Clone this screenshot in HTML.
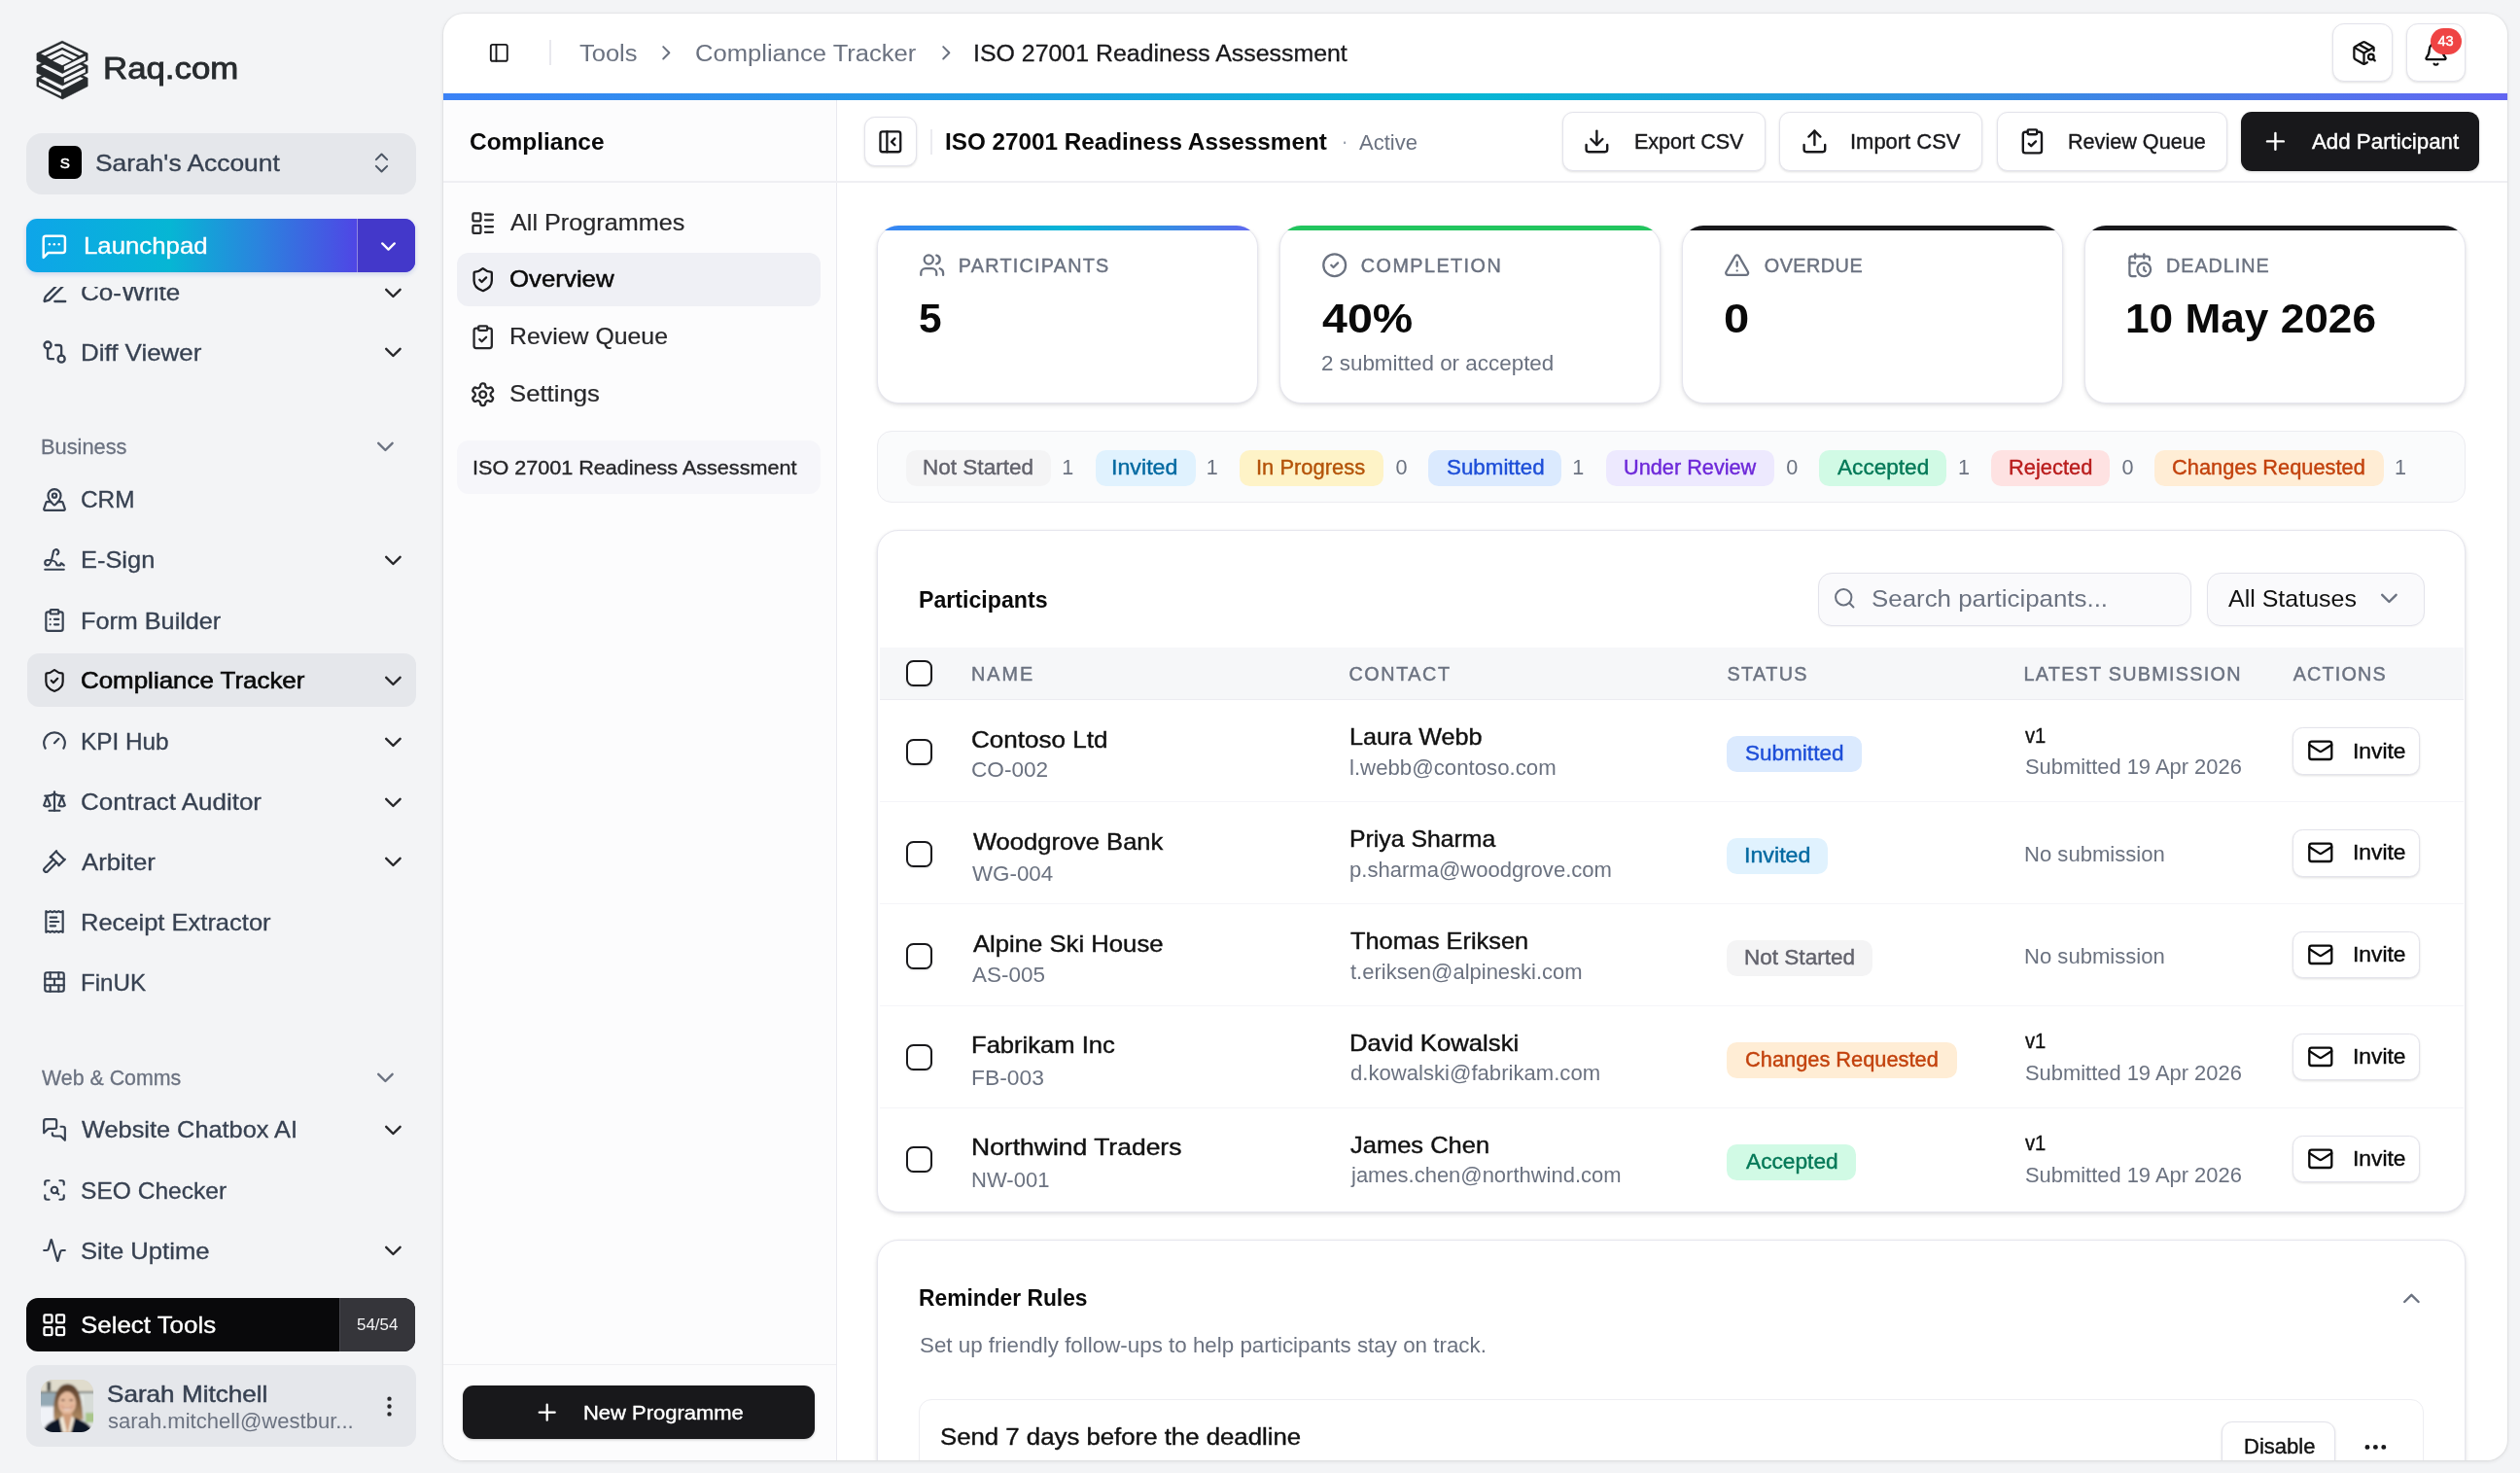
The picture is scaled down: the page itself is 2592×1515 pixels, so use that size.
<!DOCTYPE html>
<html lang="en"><head><meta charset="utf-8"><title>Compliance Tracker</title>
<style>
html,body{margin:0;padding:0}
body{width:2592px;height:1515px;overflow:hidden;background:#f3f4f6;position:relative;font-family:"Liberation Sans",sans-serif}
.a{position:absolute;box-sizing:border-box}
.t{white-space:nowrap;line-height:1;margin:0}
.i{fill:none;stroke-linecap:round;stroke-linejoin:round;overflow:visible}
</style></head>
<body>
<svg class="a" style="left:34px;top:38px" width="64" height="68" viewBox="0 0 1386 1473"><polygon points="650,640 1215,915 1215,1100 655,1385 85,1100 85,915" fill="#272b2e" stroke="#272b2e" stroke-width="14" stroke-linejoin="round"/><polygon points="650,700 1125,928 650,1175 175,928" fill="#f3f4f6"/><polygon points="128,995 625,1243 625,1322 128,1075" fill="#f3f4f6"/><polygon points="650,365 1215,640 1215,800 655,1085 85,800 85,640" fill="#272b2e" stroke="#272b2e" stroke-width="14" stroke-linejoin="round"/><polygon points="650,425 1125,653 650,900 175,653" fill="#f3f4f6"/><polygon points="690,930 1165,700 1165,790 690,1020" fill="#f3f4f6"/><polygon points="650,90 1215,365 1215,525 655,810 85,525 85,365" fill="#272b2e" stroke="#272b2e" stroke-width="14" stroke-linejoin="round"/><polygon points="175,372 650,140 1125,372 1035,416 650,235 265,418" fill="#f3f4f6"/><polygon points="310,450 650,285 990,450 900,502 650,380 400,502" fill="#f3f4f6"/><polygon points="650,430 860,532 650,635 440,532" fill="#f3f4f6"/><polygon points="690,655 1165,425 1165,515 690,745" fill="#f3f4f6"/></svg>
<span class="a t" style="top:55.4px;font-size:31.4px;color:#272b2e;-webkit-text-stroke:0.85px #272b2e;transform:scaleX(1.1089);transform-origin:0 50%;left:105.6px;">Raq.com</span>
<div class="a" style="left:27.0px;top:137.0px;width:400.6px;height:62.6px;background:#e5e7eb;border-radius:16px;"></div>
<div class="a" style="left:49.8px;top:150.1px;width:34.3px;height:34.3px;background:#000;border-radius:7px;"></div>
<span class="a t" style="top:160.0px;font-size:15.2px;color:#fff;-webkit-text-stroke:0.5px #fff;left:61.7px;transform:translateZ(0);">S</span>
<span class="a t" style="top:157.1px;font-size:23.4px;color:#374151;-webkit-text-stroke:0.35px #374151;transform:scaleX(1.1272);transform-origin:0 50%;left:97.9px;">Sarah's Account</span>
<svg class="a i" style="left:378.5px;top:153.5px;" width="27" height="27" viewBox="0 0 24 24" stroke="#4b5563" stroke-width="1.8"><path d="m7 15 5 5 5-5"/><path d="m7 9 5-5 5 5"/></svg>
<svg class="a i" style="left:42.0px;top:286.2px;" width="28.8" height="28.8" viewBox="0 0 24 24" stroke="#374151" stroke-width="2"><path d="M12 20h9"/><path d="M16.376 3.622a1 1 0 0 1 3.002 3.002L7.368 18.635a2 2 0 0 1-.855.506l-2.872.838a.5.5 0 0 1-.62-.62l.838-2.872a2 2 0 0 1 .506-.854z"/></svg>
<span class="a t" style="top:290.1px;font-size:23.4px;color:#374151;-webkit-text-stroke:0.3px #374151;transform:scaleX(1.1121);transform-origin:0 50%;left:83.1px;">Co-Write</span>
<svg class="a i" style="left:389.9px;top:286.7px;" width="28.8" height="28.8" viewBox="0 0 24 24" stroke="#27272a" stroke-width="2"><path d="m6 9 6 6 6-6"/></svg>
<div class="a" style="left:0.0px;top:280.0px;width:440.0px;height:14.7px;background:#f3f4f6;"></div>
<svg class="a i" style="left:42.3px;top:348.1px;" width="28.2" height="28.2" viewBox="0 0 24 24" stroke="#374151" stroke-width="2"><circle cx="18" cy="18" r="3"/><circle cx="6" cy="6" r="3"/><path d="M13 6h3a2 2 0 0 1 2 2v7"/><path d="M11 18H8a2 2 0 0 1-2-2V9"/></svg>
<span class="a t" style="top:351.7px;font-size:23.4px;color:#374151;-webkit-text-stroke:0.3px #374151;transform:scaleX(1.1082);transform-origin:0 50%;left:83.1px;">Diff Viewer</span>
<svg class="a i" style="left:389.9px;top:348.3px;" width="28.8" height="28.8" viewBox="0 0 24 24" stroke="#27272a" stroke-width="2"><path d="m6 9 6 6 6-6"/></svg>
<div class="a" style="left:27.2px;top:225.4px;width:399.6px;height:54.4px;border-radius:11px;box-shadow:0 2px 5px rgba(30,64,175,.18);background:linear-gradient(90deg,#0ea5e9 0%,#06b6d4 37%,#2b83de 60%,#4f46e5 85%);overflow:hidden;"><div class="a" style="left:339.8px;top:0;width:60px;height:54.4px;background:#4338ca;border-left:1.6px solid rgba(255,255,255,.42)"></div></div>
<svg class="a i" style="left:41.0px;top:239.2px;" width="29.6" height="29.6" viewBox="0 0 24 24" stroke="#fff" stroke-width="2"><path d="M21 15a2 2 0 0 1-2 2H7l-4 4V5a2 2 0 0 1 2-2h14a2 2 0 0 1 2 2z"/><path d="M8 10h.01"/><path d="M12 10h.01"/><path d="M16 10h.01"/></svg>
<span class="a t" style="top:242.0px;font-size:23.4px;color:#fff;-webkit-text-stroke:0.35px #fff;transform:scaleX(1.1024);transform-origin:0 50%;left:85.8px;">Launchpad</span>
<svg class="a i" style="left:386.5px;top:240.9px;" width="25" height="25" viewBox="0 0 24 24" stroke="#fff" stroke-width="2.2"><path d="m6 9 6 6 6-6"/></svg>
<span class="a t" style="top:449.2px;font-size:21.6px;color:#6b7280;-webkit-text-stroke:0.3px #6b7280;transform:scaleX(1.0101);transform-origin:0 50%;left:41.6px;">Business</span>
<svg class="a i" style="left:382.3px;top:445.3px;" width="28.8" height="28.8" viewBox="0 0 24 24" stroke="#6b7280" stroke-width="2"><path d="m6 9 6 6 6-6"/></svg>
<svg class="a i" style="left:43.4px;top:500.5px;" width="26" height="26" viewBox="0 0 24 24" stroke="#374151" stroke-width="2"><path d="M18 8c0 3.613-3.869 7.429-5.393 8.795a1 1 0 0 1-1.214 0C9.87 15.429 6 11.613 6 8a6 6 0 0 1 12 0"/><circle cx="12" cy="8" r="2"/><path d="M8.714 14h-3.71a1 1 0 0 0-.948.683l-2.004 6A1 1 0 0 0 3 22h18a1 1 0 0 0 .948-1.316l-2-6a1 1 0 0 0-.949-.684h-3.712"/></svg>
<span class="a t" style="top:503.0px;font-size:23.4px;color:#374151;-webkit-text-stroke:0.3px #374151;transform:scaleX(1.0417);transform-origin:0 50%;left:83.2px;">CRM</span>
<svg class="a i" style="left:43.4px;top:562.8px;" width="26" height="26" viewBox="0 0 24 24" stroke="#374151" stroke-width="2"><path d="m21 17-2.156-1.868A.5.5 0 0 0 18 15.5v.5a1 1 0 0 1-1 1h-2a1 1 0 0 1-1-1c0-2.545-3.991-3.97-8.5-4a1 1 0 0 0 0 5c4.153 0 4.745-11.295 5.708-13.5a2.5 2.5 0 1 1 3.31 3.284"/><path d="M3 21h18"/></svg>
<span class="a t" style="top:565.3px;font-size:23.4px;color:#374151;-webkit-text-stroke:0.3px #374151;transform:scaleX(1.0866);transform-origin:0 50%;left:83.1px;">E-Sign</span>
<svg class="a i" style="left:389.9px;top:561.9px;" width="28.8" height="28.8" viewBox="0 0 24 24" stroke="#27272a" stroke-width="2"><path d="m6 9 6 6 6-6"/></svg>
<svg class="a i" style="left:43.4px;top:625.0px;" width="26" height="26" viewBox="0 0 24 24" stroke="#374151" stroke-width="2"><rect width="8" height="4" x="8" y="2" rx="1" ry="1"/><path d="M16 4h2a2 2 0 0 1 2 2v14a2 2 0 0 1-2 2H6a2 2 0 0 1-2-2V6a2 2 0 0 1 2-2h2"/><path d="M12 11h4"/><path d="M12 16h4"/><path d="M8 11h.01"/><path d="M8 16h.01"/></svg>
<span class="a t" style="top:627.5px;font-size:23.4px;color:#374151;-webkit-text-stroke:0.3px #374151;transform:scaleX(1.0775);transform-origin:0 50%;left:83.1px;">Form Builder</span>
<div class="a" style="left:28.0px;top:672.4px;width:399.6px;height:54.4px;background:#e5e7eb;border-radius:12px;"></div>
<svg class="a i" style="left:43.4px;top:686.6px;" width="26" height="26" viewBox="0 0 24 24" stroke="#18181b" stroke-width="2"><path d="M20 13c0 5-3.5 7.5-7.66 8.95a1 1 0 0 1-.67-.01C7.5 20.5 4 18 4 13V6a1 1 0 0 1 1-1c2 0 4.5-1.2 6.24-2.72a1.17 1.17 0 0 1 1.52 0C14.51 3.81 17 5 19 5a1 1 0 0 1 1 1z"/><path d="m9 12 2 2 4-4"/></svg>
<span class="a t" style="top:689.1px;font-size:23.4px;color:#0a0a0a;-webkit-text-stroke:0.6px #0a0a0a;transform:scaleX(1.1078);transform-origin:0 50%;left:83.1px;">Compliance Tracker</span>
<svg class="a i" style="left:389.9px;top:685.7px;" width="28.8" height="28.8" viewBox="0 0 24 24" stroke="#27272a" stroke-width="2"><path d="m6 9 6 6 6-6"/></svg>
<svg class="a i" style="left:43.4px;top:749.4px;" width="26" height="26" viewBox="0 0 24 24" stroke="#374151" stroke-width="2"><path d="m12 14 4-4"/><path d="M3.34 19a10 10 0 1 1 17.32 0"/></svg>
<span class="a t" style="top:751.9px;font-size:23.4px;color:#374151;-webkit-text-stroke:0.3px #374151;transform:scaleX(1.0406);transform-origin:0 50%;left:83.2px;">KPI Hub</span>
<svg class="a i" style="left:389.9px;top:748.5px;" width="28.8" height="28.8" viewBox="0 0 24 24" stroke="#27272a" stroke-width="2"><path d="m6 9 6 6 6-6"/></svg>
<svg class="a i" style="left:43.4px;top:811.4px;" width="26" height="26" viewBox="0 0 24 24" stroke="#374151" stroke-width="2"><path d="m16 16 3-8 3 8c-.87.65-1.92 1-3 1s-2.13-.35-3-1Z"/><path d="m2 16 3-8 3 8c-.87.65-1.92 1-3 1s-2.13-.35-3-1Z"/><path d="M7 21h10"/><path d="M12 3v18"/><path d="M3 7h2c2 0 5-1 7-2 2 1 5 2 7 2h2"/></svg>
<span class="a t" style="top:813.9px;font-size:23.4px;color:#374151;-webkit-text-stroke:0.3px #374151;transform:scaleX(1.1087);transform-origin:0 50%;left:83.1px;">Contract Auditor</span>
<svg class="a i" style="left:389.9px;top:810.5px;" width="28.8" height="28.8" viewBox="0 0 24 24" stroke="#27272a" stroke-width="2"><path d="m6 9 6 6 6-6"/></svg>
<svg class="a i" style="left:43.4px;top:873.0px;" width="26" height="26" viewBox="0 0 24 24" stroke="#374151" stroke-width="2"><path d="m14 13-8.381 8.38a1 1 0 0 1-3.001-3l8.384-8.381"/><path d="m16 16 6-6"/><path d="m21.5 10.5-8-8"/><path d="m8 8 6-6"/><path d="m8.5 7.5 8 8"/></svg>
<span class="a t" style="top:875.5px;font-size:23.4px;color:#374151;-webkit-text-stroke:0.3px #374151;transform:scaleX(1.0998);transform-origin:0 50%;left:84.2px;">Arbiter</span>
<svg class="a i" style="left:389.9px;top:872.1px;" width="28.8" height="28.8" viewBox="0 0 24 24" stroke="#27272a" stroke-width="2"><path d="m6 9 6 6 6-6"/></svg>
<svg class="a i" style="left:43.4px;top:935.3px;" width="26" height="26" viewBox="0 0 24 24" stroke="#374151" stroke-width="2"><path d="M4 2v20l2-1 2 1 2-1 2 1 2-1 2 1 2-1 2 1V2l-2 1-2-1-2 1-2-1-2 1-2-1-2 1Z"/><path d="M14 8H8"/><path d="M16 12H8"/><path d="M13 16H8"/></svg>
<span class="a t" style="top:937.8px;font-size:23.4px;color:#374151;-webkit-text-stroke:0.3px #374151;transform:scaleX(1.0901);transform-origin:0 50%;left:83.1px;">Receipt Extractor</span>
<svg class="a i" style="left:43.4px;top:997.3px;" width="26" height="26" viewBox="0 0 24 24" stroke="#374151" stroke-width="2"><rect width="18" height="18" x="3" y="3" rx="2"/><path d="M12 9v6"/><path d="M16 15v6"/><path d="M16 3v6"/><path d="M3 15h18"/><path d="M3 9h18"/><path d="M8 15v6"/><path d="M8 3v6"/></svg>
<span class="a t" style="top:999.8px;font-size:23.4px;color:#374151;-webkit-text-stroke:0.3px #374151;transform:scaleX(1.0328);transform-origin:0 50%;left:83.2px;">FinUK</span>
<span class="a t" style="top:1097.5px;font-size:21.6px;color:#6b7280;-webkit-text-stroke:0.3px #6b7280;transform:scaleX(0.9890);transform-origin:0 50%;left:42.6px;">Web &amp; Comms</span>
<svg class="a i" style="left:382.3px;top:1093.6px;" width="28.8" height="28.8" viewBox="0 0 24 24" stroke="#6b7280" stroke-width="2"><path d="m6 9 6 6 6-6"/></svg>
<svg class="a i" style="left:43.4px;top:1148.6px;" width="26" height="26" viewBox="0 0 24 24" stroke="#374151" stroke-width="2"><path d="M14 9a2 2 0 0 1-2 2H6l-4 4V4a2 2 0 0 1 2-2h8a2 2 0 0 1 2 2z"/><path d="M18 9h2a2 2 0 0 1 2 2v11l-4-4h-6a2 2 0 0 1-2-2v-1"/></svg>
<span class="a t" style="top:1151.1px;font-size:23.4px;color:#374151;-webkit-text-stroke:0.3px #374151;transform:scaleX(1.0831);transform-origin:0 50%;left:84.2px;">Website Chatbox AI</span>
<svg class="a i" style="left:389.9px;top:1147.7px;" width="28.8" height="28.8" viewBox="0 0 24 24" stroke="#27272a" stroke-width="2"><path d="m6 9 6 6 6-6"/></svg>
<svg class="a i" style="left:43.4px;top:1211.3px;" width="26" height="26" viewBox="0 0 24 24" stroke="#374151" stroke-width="2"><path d="M3 7V5a2 2 0 0 1 2-2h2"/><path d="M17 3h2a2 2 0 0 1 2 2v2"/><path d="M21 17v2a2 2 0 0 1-2 2h-2"/><path d="M7 21H5a2 2 0 0 1-2-2v-2"/><circle cx="12" cy="12" r="3"/><path d="m16 16-1.9-1.9"/></svg>
<span class="a t" style="top:1213.8px;font-size:23.4px;color:#374151;-webkit-text-stroke:0.3px #374151;transform:scaleX(1.0499);transform-origin:0 50%;left:83.2px;">SEO Checker</span>
<svg class="a i" style="left:43.4px;top:1273.0px;" width="26" height="26" viewBox="0 0 24 24" stroke="#374151" stroke-width="2"><path d="M22 12h-2.48a2 2 0 0 0-1.93 1.46l-2.35 8.36a.25.25 0 0 1-.48 0L9.24 2.18a.25.25 0 0 0-.48 0l-2.35 8.36A2 2 0 0 1 4.49 12H2"/></svg>
<span class="a t" style="top:1275.5px;font-size:23.4px;color:#374151;-webkit-text-stroke:0.3px #374151;transform:scaleX(1.0960);transform-origin:0 50%;left:83.1px;">Site Uptime</span>
<svg class="a i" style="left:389.9px;top:1272.1px;" width="28.8" height="28.8" viewBox="0 0 24 24" stroke="#27272a" stroke-width="2"><path d="m6 9 6 6 6-6"/></svg>
<div class="a" style="left:27.2px;top:1334.9px;width:399.8px;height:55.4px;background:#09090b;border-radius:12px;overflow:hidden;"><div class="a" style="left:321.8px;top:0;width:78px;height:55.4px;background:#35353a;border-left:1.2px solid #47474d"></div></div>
<svg class="a i" style="left:41.9px;top:1349.0px;" width="27.5" height="27.5" viewBox="0 0 24 24" stroke="#fff" stroke-width="2"><rect width="7" height="7" x="3" y="3" rx="1"/><rect width="7" height="7" x="14" y="3" rx="1"/><rect width="7" height="7" x="14" y="14" rx="1"/><rect width="7" height="7" x="3" y="14" rx="1"/></svg>
<span class="a t" style="top:1352.0px;font-size:23.4px;color:#fff;-webkit-text-stroke:0.35px #fff;transform:scaleX(1.1068);transform-origin:0 50%;left:82.5px;">Select Tools</span>
<span class="a t" style="top:1354.9px;font-size:16px;color:#f4f4f5;transform:scaleX(1.0563);transform-origin:0 50%;left:367.0px;">54/54</span>
<div class="a" style="left:27.2px;top:1404.2px;width:400.4px;height:84.0px;background:#e5e7eb;border-radius:13px;"></div>
<svg class="a" style="left:42px;top:1419px" width="54" height="54" viewBox="0 0 54 54">
<defs><clipPath id="av"><rect width="54" height="54" rx="12.5"/></clipPath>
<linearGradient id="hair" x1="0" y1="0" x2="0" y2="1"><stop offset="0" stop-color="#5a3f2c"/><stop offset=".45" stop-color="#7c5a3e"/><stop offset="1" stop-color="#b08c64"/></linearGradient>
<filter id="bl" x="-20%" y="-20%" width="140%" height="140%"><feGaussianBlur stdDeviation="0.9"/></filter></defs>
<g clip-path="url(#av)">
<rect width="54" height="54" fill="#d9dcd8"/>
<g filter="url(#bl)">
<rect x="-3" y="-3" width="60" height="15.5" fill="#e0dccd"/>
<rect x="-3" y="12" width="60" height="1.8" fill="#6c7370"/>
<rect x="-3" y="14" width="19" height="14" fill="#94a9b5"/>
<rect x="-3" y="27.5" width="17" height="30" fill="#f0f2f7"/>
<rect x="6.5" y="2" width="3.6" height="9.5" fill="#3f3f3a"/>
<rect x="38" y="14" width="19" height="30" fill="#d7dcd8"/>
<rect x="41" y="16" width="3" height="24" fill="#e6ebe8"/>
<rect x="46" y="34" width="11" height="11" fill="#a9c68b"/>
<rect x="38" y="44" width="19" height="12" fill="#dfe3df"/>
<path d="M13.5 41 C12 22 15 4.5 27.5 4.5 C40 4.5 42.5 22 43.5 41 Z" fill="url(#hair)"/>
<ellipse cx="27" cy="24" rx="9.2" ry="12" fill="#e4b99c"/>
<path d="M17.2 21 C17.5 9.5 36.5 9.5 36.8 21 C34 14.5 30.5 12.8 27.5 12.6 C23.5 12.8 20 15 17.2 21Z" fill="#684931"/>
<ellipse cx="22.8" cy="21.2" rx="1.9" ry="0.9" fill="#6b4a3a"/>
<ellipse cx="31.2" cy="21.2" rx="1.9" ry="0.9" fill="#6b4a3a"/>
<ellipse cx="21.5" cy="27" rx="2.2" ry="1.6" fill="#dfa58c" opacity=".8"/>
<ellipse cx="32.5" cy="27" rx="2.2" ry="1.6" fill="#dfa58c" opacity=".8"/>
<path d="M22.3 29.2 Q27 33.6 31.7 29.2 Q27 31.2 22.3 29.2Z" fill="#f6ebe6"/>
<path d="M22 29 Q27 30.6 32 29" stroke="#b9705f" stroke-width=".7" fill="none"/>
<path d="M21.5 35 L32.5 35 L34 56 L20 56Z" fill="#cf9d7a"/>
<path d="M17.5 41 L23 37.5 L27 54 L16.5 54Z" fill="#f0e6d6"/>
<path d="M36.5 41 L31.5 37.5 L28 54 L38 54Z" fill="#f0e6d6"/>
<path d="M2 56 C3 46 10 43.5 19 39.5 L22.5 56Z" fill="#0e1526"/>
<path d="M53.5 56 C52.5 46 45 43.5 35 39 L30.5 56Z" fill="#0e1526"/>
</g></g></svg>
<span class="a t" style="top:1422.8px;font-size:23.4px;color:#374151;-webkit-text-stroke:0.45px #374151;transform:scaleX(1.1157);transform-origin:0 50%;left:109.7px;">Sarah Mitchell</span>
<span class="a t" style="top:1451.2px;font-size:21.6px;color:#6b7280;transform:scaleX(1.0209);transform-origin:0 50%;left:110.8px;">sarah.mitchell@westbur...</span>
<svg class="a i" style="left:387.0px;top:1432.8px;" width="27" height="27" viewBox="0 0 24 24" stroke="#27272a" stroke-width="1.9"><circle cx="12" cy="12" r="1"/><circle cx="12" cy="5" r="1"/><circle cx="12" cy="19" r="1"/></svg>
<div class="a" style="left:456px;top:14px;width:2122.5px;height:1487.5px;background:#fff;border-radius:21px;box-shadow:0 1px 4px rgba(0,0,0,.10),0 0 0 1px rgba(0,0,0,.03);overflow:hidden">
<div class="a" style="left:-456px;top:-14px;width:2592px;height:1515px">
<div class="a" style="left:456.0px;top:103.0px;width:404.0px;height:1400.0px;background:#fcfcfd;"></div>
<div class="a" style="left:456.0px;top:96.0px;width:2122.5px;height:7.4px;background:linear-gradient(90deg,#3b82f6 0%,#06b6d4 50%,#6366f1 100%);"></div>
<div class="a" style="left:859.5px;top:103.0px;width:1.6px;height:1400.0px;background:#e9e9ef;"></div>
<div class="a" style="left:456.0px;top:186.2px;width:2122.5px;height:1.6px;background:#efeff3;"></div>
<div class="a" style="left:456.0px;top:1402.6px;width:404.0px;height:1.6px;background:#efeff3;"></div>
<svg class="a i" style="left:502.4px;top:43.3px;" width="22.6" height="22.6" viewBox="0 0 24 24" stroke="#18181b" stroke-width="2"><rect width="18" height="18" x="3" y="3" rx="2"/><path d="M9 3v18"/></svg>
<div class="a" style="left:565.4px;top:40.7px;width:1.6px;height:26.4px;background:#e8e8ee;"></div>
<span class="a t" style="top:44.0px;font-size:23.5px;color:#6b7280;transform:scaleX(1.0848);transform-origin:0 50%;left:596.2px;">Tools</span>
<svg class="a i" style="left:673.1px;top:41.9px;" width="24.6" height="24.6" viewBox="0 0 24 24" stroke="#6b7280" stroke-width="1.9"><path d="m9 18 6-6-6-6"/></svg>
<span class="a t" style="top:44.0px;font-size:23.5px;color:#6b7280;transform:scaleX(1.0879);transform-origin:0 50%;left:714.7px;">Compliance Tracker</span>
<svg class="a i" style="left:961.1px;top:41.9px;" width="24.6" height="24.6" viewBox="0 0 24 24" stroke="#6b7280" stroke-width="1.9"><path d="m9 18 6-6-6-6"/></svg>
<span class="a t" style="top:44.0px;font-size:23.5px;color:#18181b;-webkit-text-stroke:0.3px #18181b;transform:scaleX(1.0595);transform-origin:0 50%;left:1000.8px;">ISO 27001 Readiness Assessment</span>
<div class="a" style="left:2398.9px;top:24.2px;width:61.9px;height:60.2px;background:#fff;border-radius:12px;border:1.6px solid #e3e3eb;box-shadow:0 1px 3px rgba(0,0,0,.09), 0 1px 2px rgba(0,0,0,.04);"></div>
<div class="a" style="left:2475.3px;top:24.2px;width:60.9px;height:60.2px;background:#fff;border-radius:12px;border:1.6px solid #e3e3eb;box-shadow:0 1px 3px rgba(0,0,0,.09), 0 1px 2px rgba(0,0,0,.04);"></div>
<svg class="a i" style="left:2417.8px;top:40.9px;" width="27" height="27" viewBox="0 0 24 24" stroke="#111" stroke-width="2"><path d="M21 10V8a2 2 0 0 0-1-1.73l-7-4a2 2 0 0 0-2 0l-7 4A2 2 0 0 0 3 8v8a2 2 0 0 0 1 1.73l7 4a2 2 0 0 0 2 0l2-1.14"/><path d="m7.5 4.27 9 5.15"/><polyline points="3.29 7 12 12 20.71 7"/><line x1="12" x2="12" y1="22" y2="12"/><circle cx="18.5" cy="15.5" r="2.5"/><path d="M20.27 17.27 22 19"/></svg>
<svg class="a i" style="left:2491.8px;top:41.7px;" width="27" height="27" viewBox="0 0 24 24" stroke="#111" stroke-width="2"><path d="M10.268 21a2 2 0 0 0 3.464 0"/><path d="M3.262 15.326A1 1 0 0 0 4 17h16a1 1 0 0 0 .74-1.673C19.41 13.956 18 12.499 18 8A6 6 0 0 0 6 8c0 4.499-1.411 5.956-2.738 7.326"/></svg>
<div class="a" style="left:2499.5px;top:28.6px;width:32.4px;height:27.1px;background:#ef4444;border-radius:13.6px;"></div>
<span class="a t" style="top:35.3px;font-size:14.6px;color:#fff;-webkit-text-stroke:0.45px #fff;left:2507.5px;transform:translateZ(0);">43</span>
<span class="a t" style="top:135.2px;font-size:23.6px;color:#0a0a0a;font-weight:700;transform:scaleX(1.0359);transform-origin:0 50%;left:483.3px;">Compliance</span>
<div class="a" style="left:889.3px;top:119.5px;width:53.4px;height:51.8px;background:#fff;border-radius:11px;border:1.6px solid #e3e3eb;box-shadow:0 1px 3px rgba(0,0,0,.09), 0 1px 2px rgba(0,0,0,.04);"></div>
<svg class="a i" style="left:901.5px;top:131.8px;" width="27.7" height="27.7" viewBox="0 0 24 24" stroke="#18181b" stroke-width="2"><rect width="18" height="18" x="3" y="3" rx="2"/><path d="M9 3v18"/><path d="m16 15-3-3 3-3"/></svg>
<div class="a" style="left:957.0px;top:132.5px;width:1.6px;height:26.5px;background:#ebebf0;"></div>
<span class="a t" style="top:135.2px;font-size:23.6px;color:#0a0a0a;font-weight:700;transform:scaleX(1.0280);transform-origin:0 50%;left:971.9px;">ISO 27001 Readiness Assessment</span>
<span class="a t" style="top:135.2px;font-size:21.6px;color:#9ca3af;left:1379.6px;transform:translateZ(0);">·</span>
<span class="a t" style="top:135.6px;font-size:21.2px;color:#6b7280;transform:scaleX(1.0384);transform-origin:0 50%;left:1398.3px;">Active</span>
<div class="a" style="left:1607.1px;top:114.7px;width:208.9px;height:61.4px;background:#fff;border-radius:11px;border:1.6px solid #e3e3eb;box-shadow:0 1px 3px rgba(0,0,0,.09), 0 1px 2px rgba(0,0,0,.04);"></div>
<svg class="a i" style="left:1628.3px;top:130.9px;" width="28.8" height="28.8" viewBox="0 0 24 24" stroke="#18181b" stroke-width="2"><path d="M21 15v4a2 2 0 0 1-2 2H5a2 2 0 0 1-2-2v-4"/><polyline points="7 10 12 15 17 10"/><line x1="12" x2="12" y1="15" y2="3"/></svg>
<span class="a t" style="top:135.1px;font-size:22.0px;color:#18181b;-webkit-text-stroke:0.4px #18181b;transform:scaleX(0.9785);transform-origin:0 50%;left:1680.6px;">Export CSV</span>
<div class="a" style="left:1830.3px;top:114.7px;width:208.8px;height:61.4px;background:#fff;border-radius:11px;border:1.6px solid #e3e3eb;box-shadow:0 1px 3px rgba(0,0,0,.09), 0 1px 2px rgba(0,0,0,.04);"></div>
<svg class="a i" style="left:1851.9px;top:130.9px;" width="28.8" height="28.8" viewBox="0 0 24 24" stroke="#18181b" stroke-width="2"><path d="M21 15v4a2 2 0 0 1-2 2H5a2 2 0 0 1-2-2v-4"/><polyline points="17 8 12 3 7 8"/><line x1="12" x2="12" y1="3" y2="15"/></svg>
<span class="a t" style="top:135.1px;font-size:22.0px;color:#18181b;-webkit-text-stroke:0.4px #18181b;transform:scaleX(0.9980);transform-origin:0 50%;left:1902.8px;">Import CSV</span>
<div class="a" style="left:2054.3px;top:114.7px;width:236.7px;height:61.4px;background:#fff;border-radius:11px;border:1.6px solid #e3e3eb;box-shadow:0 1px 3px rgba(0,0,0,.09), 0 1px 2px rgba(0,0,0,.04);"></div>
<svg class="a i" style="left:2075.6px;top:130.9px;" width="28.8" height="28.8" viewBox="0 0 24 24" stroke="#18181b" stroke-width="2"><rect width="8" height="4" x="8" y="2" rx="1" ry="1"/><path d="M16 4h2a2 2 0 0 1 2 2v14a2 2 0 0 1-2 2H6a2 2 0 0 1-2-2V6a2 2 0 0 1 2-2h2"/><path d="m9 14 2 2 4-4"/></svg>
<span class="a t" style="top:135.1px;font-size:22.0px;color:#18181b;-webkit-text-stroke:0.4px #18181b;transform:scaleX(0.9821);transform-origin:0 50%;left:2127.0px;">Review Queue</span>
<div class="a" style="left:2305.3px;top:114.7px;width:244.5px;height:61.4px;background:#18181b;border-radius:11px;box-shadow:0 1px 3px rgba(0,0,0,.15);"></div>
<svg class="a i" style="left:2325.8px;top:130.9px;" width="28.8" height="28.8" viewBox="0 0 24 24" stroke="#fff" stroke-width="2"><path d="M5 12h14"/><path d="M12 5v14"/></svg>
<span class="a t" style="top:135.1px;font-size:22.0px;color:#fff;-webkit-text-stroke:0.4px #fff;transform:scaleX(1.0135);transform-origin:0 50%;left:2378.2px;">Add Participant</span>
<svg class="a i" style="left:483.1px;top:215.5px;" width="27.4" height="27.4" viewBox="0 0 24 24" stroke="#27272a" stroke-width="2"><rect width="7" height="7" x="3" y="3" rx="1"/><rect width="7" height="7" x="3" y="14" rx="1"/><path d="M14 4h7"/><path d="M14 9h7"/><path d="M14 15h7"/><path d="M14 20h7"/></svg>
<span class="a t" style="top:218.2px;font-size:23.6px;color:#27272a;-webkit-text-stroke:0.2px #27272a;transform:scaleX(1.0681);transform-origin:0 50%;left:525.3px;">All Programmes</span>
<div class="a" style="left:469.6px;top:259.7px;width:374.4px;height:55.3px;background:#eff0f5;border-radius:12px;"></div>
<svg class="a i" style="left:483.1px;top:273.6px;" width="27.4" height="27.4" viewBox="0 0 24 24" stroke="#18181b" stroke-width="2"><path d="M20 13c0 5-3.5 7.5-7.66 8.95a1 1 0 0 1-.67-.01C7.5 20.5 4 18 4 13V6a1 1 0 0 1 1-1c2 0 4.5-1.2 6.24-2.72a1.17 1.17 0 0 1 1.52 0C14.51 3.81 17 5 19 5a1 1 0 0 1 1 1z"/><path d="m9 12 2 2 4-4"/></svg>
<span class="a t" style="top:276.3px;font-size:23.6px;color:#0a0a0a;-webkit-text-stroke:0.5px #0a0a0a;transform:scaleX(1.0947);transform-origin:0 50%;left:524.2px;">Overview</span>
<svg class="a i" style="left:483.1px;top:332.5px;" width="27.4" height="27.4" viewBox="0 0 24 24" stroke="#27272a" stroke-width="2"><rect width="8" height="4" x="8" y="2" rx="1" ry="1"/><path d="M16 4h2a2 2 0 0 1 2 2v14a2 2 0 0 1-2 2H6a2 2 0 0 1-2-2V6a2 2 0 0 1 2-2h2"/><path d="m9 14 2 2 4-4"/></svg>
<span class="a t" style="top:335.2px;font-size:23.6px;color:#27272a;-webkit-text-stroke:0.2px #27272a;transform:scaleX(1.0532);transform-origin:0 50%;left:524.2px;">Review Queue</span>
<svg class="a i" style="left:483.1px;top:391.5px;" width="27.4" height="27.4" viewBox="0 0 24 24" stroke="#27272a" stroke-width="2"><path d="M12.22 2h-.44a2 2 0 0 0-2 2v.18a2 2 0 0 1-1 1.73l-.43.25a2 2 0 0 1-2 0l-.15-.08a2 2 0 0 0-2.73.73l-.22.38a2 2 0 0 0 .73 2.73l.15.1a2 2 0 0 1 1 1.72v.51a2 2 0 0 1-1 1.74l-.15.09a2 2 0 0 0-.73 2.73l.22.38a2 2 0 0 0 2.73.73l.15-.08a2 2 0 0 1 2 0l.43.25a2 2 0 0 1 1 1.73V20a2 2 0 0 0 2 2h.44a2 2 0 0 0 2-2v-.18a2 2 0 0 1 1-1.73l.43-.25a2 2 0 0 1 2 0l.15.08a2 2 0 0 0 2.73-.73l.22-.39a2 2 0 0 0-.73-2.73l-.15-.08a2 2 0 0 1-1-1.74v-.5a2 2 0 0 1 1-1.74l.15-.09a2 2 0 0 0 .73-2.73l-.22-.38a2 2 0 0 0-2.73-.73l-.15.08a2 2 0 0 1-2 0l-.43-.25a2 2 0 0 1-1-1.73V4a2 2 0 0 0-2-2z"/><circle cx="12" cy="12" r="3"/></svg>
<span class="a t" style="top:394.2px;font-size:23.6px;color:#27272a;-webkit-text-stroke:0.2px #27272a;transform:scaleX(1.0892);transform-origin:0 50%;left:524.2px;">Settings</span>
<div class="a" style="left:469.6px;top:453.3px;width:374.4px;height:54.7px;background:#f6f6fa;border-radius:12px;"></div>
<span class="a t" style="top:470.3px;font-size:21.1px;color:#27272a;-webkit-text-stroke:0.4px #27272a;transform:scaleX(1.0228);transform-origin:0 50%;left:485.7px;">ISO 27001 Readiness Assessment</span>
<div class="a" style="left:475.5px;top:1425.2px;width:362.9px;height:54.8px;background:#18181b;border-radius:11px;box-shadow:0 1px 3px rgba(0,0,0,.2);"></div>
<svg class="a i" style="left:549.3px;top:1438.6px;" width="27.4" height="27.4" viewBox="0 0 24 24" stroke="#fff" stroke-width="2"><path d="M5 12h14"/><path d="M12 5v14"/></svg>
<span class="a t" style="top:1442.5px;font-size:20.9px;color:#fff;-webkit-text-stroke:0.4px #fff;transform:scaleX(1.0509);transform-origin:0 50%;left:600.3px;">New Programme</span>
<div class="a" style="left:902.2px;top:231.8px;width:391.4px;height:183.4px;background:#fff;border-radius:22px;border:1.6px solid #e6e6ee;box-shadow:0 2px 5px rgba(24,24,40,.10), 0 1px 3px rgba(24,24,40,.06);"></div>
<div class="a" style="left:902.2px;top:231.8px;width:391.4px;height:24.0px;border-radius:22px 22px 0 0;overflow:hidden;"><div class="a" style="left:0;top:0;width:100%;height:5.4px;background:linear-gradient(90deg,#3b82f6,#06b6d4 50%,#6366f1)"></div></div>
<svg class="a i" style="left:945.0px;top:258.9px;" width="27.4" height="27.4" viewBox="0 0 24 24" stroke="#6b7280" stroke-width="2"><path d="M16 21v-2a4 4 0 0 0-4-4H6a4 4 0 0 0-4 4v2"/><circle cx="9" cy="7" r="4"/><path d="M22 21v-2a4 4 0 0 0-3-3.87"/><path d="M16 3.13a4 4 0 0 1 0 7.75"/></svg>
<span class="a t" style="top:263.9px;font-size:19.8px;color:#6b7280;-webkit-text-stroke:0.45px #6b7280;letter-spacing:1.246px;transform:translateZ(0);left:985.8px;">PARTICIPANTS</span>
<span class="a t" style="top:305.8px;font-size:43.2px;color:#0a0a0a;font-weight:700;transform:scaleX(0.9818);transform-origin:0 50%;left:944.9px;">5</span>
<div class="a" style="left:1316.2px;top:231.8px;width:391.4px;height:183.4px;background:#fff;border-radius:22px;border:1.6px solid #e6e6ee;box-shadow:0 2px 5px rgba(24,24,40,.10), 0 1px 3px rgba(24,24,40,.06);"></div>
<div class="a" style="left:1316.2px;top:231.8px;width:391.4px;height:24.0px;border-radius:22px 22px 0 0;overflow:hidden;"><div class="a" style="left:0;top:0;width:100%;height:5.4px;background:#22c55e"></div></div>
<svg class="a i" style="left:1359.0px;top:258.9px;" width="27.4" height="27.4" viewBox="0 0 24 24" stroke="#6b7280" stroke-width="2"><circle cx="12" cy="12" r="10"/><path d="m9 12 2 2 4-4"/></svg>
<span class="a t" style="top:263.9px;font-size:19.8px;color:#6b7280;-webkit-text-stroke:0.45px #6b7280;letter-spacing:1.455px;transform:translateZ(0);left:1399.8px;">COMPLETION</span>
<span class="a t" style="top:305.8px;font-size:43.2px;color:#0a0a0a;font-weight:700;transform:scaleX(1.0786);transform-origin:0 50%;left:1359.9px;">40%</span>
<span class="a t" style="top:362.5px;font-size:21.6px;color:#6b7280;transform:scaleX(1.0383);transform-origin:0 50%;left:1358.9px;">2 submitted or accepted</span>
<div class="a" style="left:1730.2px;top:231.8px;width:391.4px;height:183.4px;background:#fff;border-radius:22px;border:1.6px solid #e6e6ee;box-shadow:0 2px 5px rgba(24,24,40,.10), 0 1px 3px rgba(24,24,40,.06);"></div>
<div class="a" style="left:1730.2px;top:231.8px;width:391.4px;height:24.0px;border-radius:22px 22px 0 0;overflow:hidden;"><div class="a" style="left:0;top:0;width:100%;height:5.4px;background:#18181b"></div></div>
<svg class="a i" style="left:1773.0px;top:258.9px;" width="27.4" height="27.4" viewBox="0 0 24 24" stroke="#6b7280" stroke-width="2"><path d="m21.73 18-8-14a2 2 0 0 0-3.48 0l-8 14A2 2 0 0 0 4 21h16a2 2 0 0 0 1.73-3"/><path d="M12 9v4"/><path d="M12 17h.01"/></svg>
<span class="a t" style="top:263.9px;font-size:19.8px;color:#6b7280;-webkit-text-stroke:0.45px #6b7280;letter-spacing:0.495px;transform:translateZ(0);left:1814.8px;">OVERDUE</span>
<span class="a t" style="top:305.8px;font-size:43.2px;color:#0a0a0a;font-weight:700;transform:scaleX(1.0909);transform-origin:0 50%;left:1772.8px;">0</span>
<div class="a" style="left:2144.4px;top:231.8px;width:391.4px;height:183.4px;background:#fff;border-radius:22px;border:1.6px solid #e6e6ee;box-shadow:0 2px 5px rgba(24,24,40,.10), 0 1px 3px rgba(24,24,40,.06);"></div>
<div class="a" style="left:2144.4px;top:231.8px;width:391.4px;height:24.0px;border-radius:22px 22px 0 0;overflow:hidden;"><div class="a" style="left:0;top:0;width:100%;height:5.4px;background:#18181b"></div></div>
<svg class="a i" style="left:2187.2px;top:258.9px;" width="27.4" height="27.4" viewBox="0 0 24 24" stroke="#6b7280" stroke-width="2"><path d="M21 7.5V6a2 2 0 0 0-2-2H5a2 2 0 0 0-2 2v14a2 2 0 0 0 2 2h3.5"/><path d="M16 2v4"/><path d="M8 2v4"/><path d="M3 10h5"/><path d="M17.5 17.5 16 16.3V14"/><circle cx="16" cy="16" r="6"/></svg>
<span class="a t" style="top:263.9px;font-size:19.8px;color:#6b7280;-webkit-text-stroke:0.45px #6b7280;letter-spacing:0.951px;transform:translateZ(0);left:2228.0px;">DEADLINE</span>
<span class="a t" style="top:305.8px;font-size:43.2px;color:#0a0a0a;font-weight:700;transform:scaleX(1.0233);transform-origin:0 50%;left:2186.1px;">10 May 2026</span>
<div class="a" style="left:902.0px;top:443.1px;width:1634.0px;height:74.4px;background:#fafbfc;border-radius:15px;border:1.6px solid #ececf1;"></div>
<div class="a" style="left:931.9px;top:463.2px;width:148.8px;height:36.8px;background:#f4f4f5;border-radius:10.5px;"></div>
<span class="a t" style="top:470.1px;font-size:21.6px;color:#62626c;-webkit-text-stroke:0.4px #62626c;transform:scaleX(1.0437);transform-origin:0 50%;left:949.0px;">Not Started</span>
<span class="a t" style="top:469.8px;font-size:21.6px;color:#6b7280;left:1092.3px;transform:translateZ(0);">1</span>
<div class="a" style="left:1126.7px;top:463.2px;width:103.1px;height:36.8px;background:#e0f2fe;border-radius:10.5px;"></div>
<span class="a t" style="top:470.1px;font-size:21.6px;color:#0369a1;-webkit-text-stroke:0.4px #0369a1;transform:scaleX(1.0757);transform-origin:0 50%;left:1143.0px;">Invited</span>
<span class="a t" style="top:469.8px;font-size:21.6px;color:#6b7280;left:1240.8px;transform:translateZ(0);">1</span>
<div class="a" style="left:1274.9px;top:463.2px;width:147.7px;height:36.8px;background:#fef3c7;border-radius:10.5px;"></div>
<span class="a t" style="top:470.1px;font-size:21.6px;color:#b45309;-webkit-text-stroke:0.4px #b45309;transform:scaleX(1.0155);transform-origin:0 50%;left:1291.6px;">In Progress</span>
<span class="a t" style="top:469.8px;font-size:21.6px;color:#6b7280;left:1435.6px;transform:translateZ(0);">0</span>
<div class="a" style="left:1468.7px;top:463.2px;width:137.2px;height:36.8px;background:#dbeafe;border-radius:10.5px;"></div>
<span class="a t" style="top:470.1px;font-size:21.6px;color:#1d4ed8;-webkit-text-stroke:0.4px #1d4ed8;transform:scaleX(1.0352);transform-origin:0 50%;left:1487.5px;">Submitted</span>
<span class="a t" style="top:469.8px;font-size:21.6px;color:#6b7280;left:1617.2px;transform:translateZ(0);">1</span>
<div class="a" style="left:1652.0px;top:463.2px;width:172.6px;height:36.8px;background:#ede9fe;border-radius:10.5px;"></div>
<span class="a t" style="top:470.1px;font-size:21.6px;color:#6d28d9;-webkit-text-stroke:0.4px #6d28d9;transform:scaleX(1.0050);transform-origin:0 50%;left:1669.5px;">Under Review</span>
<span class="a t" style="top:469.8px;font-size:21.6px;color:#6b7280;left:1837.3px;transform:translateZ(0);">0</span>
<div class="a" style="left:1871.0px;top:463.2px;width:131.0px;height:36.8px;background:#d1fae5;border-radius:10.5px;"></div>
<span class="a t" style="top:470.1px;font-size:21.6px;color:#047857;-webkit-text-stroke:0.4px #047857;transform:scaleX(1.0469);transform-origin:0 50%;left:1890.0px;">Accepted</span>
<span class="a t" style="top:469.8px;font-size:21.6px;color:#6b7280;left:2014.0px;transform:translateZ(0);">1</span>
<div class="a" style="left:2048.0px;top:463.2px;width:121.7px;height:36.8px;background:#fee2e2;border-radius:10.5px;"></div>
<span class="a t" style="top:470.1px;font-size:21.6px;color:#b91c1c;-webkit-text-stroke:0.4px #b91c1c;transform:scaleX(1.0130);transform-origin:0 50%;left:2066.0px;">Rejected</span>
<span class="a t" style="top:469.8px;font-size:21.6px;color:#6b7280;left:2182.5px;transform:translateZ(0);">0</span>
<div class="a" style="left:2216.0px;top:463.2px;width:235.5px;height:36.8px;background:#ffedd5;border-radius:10.5px;"></div>
<span class="a t" style="top:470.1px;font-size:21.6px;color:#c2410c;-webkit-text-stroke:0.4px #c2410c;transform:scaleX(1.0099);transform-origin:0 50%;left:2234.2px;">Changes Requested</span>
<span class="a t" style="top:469.8px;font-size:21.6px;color:#6b7280;left:2462.9px;transform:translateZ(0);">1</span>
<div class="a" style="left:902.0px;top:545.2px;width:1634.0px;height:701.4px;background:#fff;border-radius:22px;border:1.6px solid #e6e6ee;box-shadow:0 2px 5px rgba(24,24,40,.10), 0 1px 3px rgba(24,24,40,.06);"></div>
<span class="a t" style="top:605.9px;font-size:23.6px;color:#0a0a0a;font-weight:700;transform:scaleX(0.9811);transform-origin:0 50%;left:944.5px;">Participants</span>
<div class="a" style="left:1869.5px;top:589.2px;width:384.4px;height:54.4px;background:#fafafc;border-radius:14px;border:1.6px solid #e3e3eb;box-shadow:0 1px 2px rgba(0,0,0,.04);"></div>
<svg class="a i" style="left:1885.3px;top:603.4px;" width="24.5" height="24.5" viewBox="0 0 24 24" stroke="#6b7280" stroke-width="2"><circle cx="11" cy="11" r="8"/><path d="m21 21-4.3-4.3"/></svg>
<span class="a t" style="top:604.3px;font-size:24.4px;color:#6b7280;transform:scaleX(1.0608);transform-origin:0 50%;left:1925.2px;">Search participants...</span>
<div class="a" style="left:2270.1px;top:589.2px;width:223.9px;height:54.4px;background:#fafafc;border-radius:14px;border:1.6px solid #e3e3eb;box-shadow:0 1px 2px rgba(0,0,0,.04);"></div>
<span class="a t" style="top:604.3px;font-size:24.4px;color:#111;transform:scaleX(1.0242);transform-origin:0 50%;left:2292.2px;">All Statuses</span>
<svg class="a i" style="left:2443.0px;top:601.4px;" width="28.8" height="28.8" viewBox="0 0 24 24" stroke="#6b7280" stroke-width="2"><path d="m6 9 6 6 6-6"/></svg>
<div class="a" style="left:904.5px;top:665.5px;width:1629.8px;height:53.9px;background:#f6f7f9;"></div>
<div class="a" style="left:904.5px;top:718.6px;width:1629.8px;height:1.6px;background:#ececf1;"></div>
<div class="a" style="left:931.7px;top:678.6px;width:27.0px;height:27.0px;background:#fff;border-radius:7.5px;border:2px solid #18181b;box-shadow:0 1px 2px rgba(0,0,0,.12);"></div>
<span class="a t" style="top:683.5px;font-size:19.8px;color:#6b7280;-webkit-text-stroke:0.45px #6b7280;letter-spacing:1.948px;transform:translateZ(0);left:999.1px;">NAME</span>
<span class="a t" style="top:683.5px;font-size:19.8px;color:#6b7280;-webkit-text-stroke:0.45px #6b7280;letter-spacing:1.558px;transform:translateZ(0);left:1387.5px;">CONTACT</span>
<span class="a t" style="top:683.5px;font-size:19.8px;color:#6b7280;-webkit-text-stroke:0.45px #6b7280;letter-spacing:1.380px;transform:translateZ(0);left:1776.5px;">STATUS</span>
<span class="a t" style="top:683.5px;font-size:19.8px;color:#6b7280;-webkit-text-stroke:0.45px #6b7280;letter-spacing:1.275px;transform:translateZ(0);left:2081.5px;">LATEST SUBMISSION</span>
<span class="a t" style="top:683.5px;font-size:19.8px;color:#6b7280;-webkit-text-stroke:0.45px #6b7280;letter-spacing:1.162px;transform:translateZ(0);left:2358.7px;">ACTIONS</span>
<div class="a" style="left:931.7px;top:759.7px;width:27.0px;height:27.0px;background:#fff;border-radius:7.5px;border:2px solid #18181b;box-shadow:0 1px 2px rgba(0,0,0,.12);"></div>
<span class="a t" style="top:749.7px;font-size:23.4px;color:#111;-webkit-text-stroke:0.4px #111;transform:scaleX(1.1134);transform-origin:0 50%;left:999.4px;">Contoso Ltd</span>
<span class="a t" style="top:781.8px;font-size:21.4px;color:#6b7280;transform:scaleX(1.0575);transform-origin:0 50%;left:999.2px;">CO-002</span>
<span class="a t" style="top:747.3px;font-size:23.4px;color:#111;-webkit-text-stroke:0.4px #111;transform:scaleX(1.0754);transform-origin:0 50%;left:1387.7px;">Laura Webb</span>
<span class="a t" style="top:778.7px;font-size:21.6px;color:#6b7280;transform:scaleX(1.0284);transform-origin:0 50%;left:1387.8px;">l.webb@contoso.com</span>
<div class="a" style="left:1776.2px;top:757.2px;width:138.6px;height:36.8px;background:#dbeafe;border-radius:10.5px;"></div>
<span class="a t" style="top:764.1px;font-size:21.6px;color:#1d4ed8;-webkit-text-stroke:0.4px #1d4ed8;transform:scaleX(1.0435);transform-origin:0 50%;left:1795.3px;">Submitted</span>
<span class="a t" style="top:745.7px;font-size:21.6px;color:#111;-webkit-text-stroke:0.4px #111;transform:scaleX(0.9313);transform-origin:0 50%;left:2082.5px;">v1</span>
<span class="a t" style="top:778.1px;font-size:21.6px;color:#6b7280;transform:scaleX(1.0142);transform-origin:0 50%;left:2082.5px;">Submitted 19 Apr 2026</span>
<div class="a" style="left:2358.2px;top:747.9px;width:131.2px;height:48.8px;background:#fff;border-radius:10.5px;border:1.6px solid #e3e3eb;box-shadow:0 1px 3px rgba(0,0,0,.09), 0 1px 2px rgba(0,0,0,.04);"></div>
<svg class="a i" style="left:2372.8px;top:758.0px;" width="27.6" height="27.6" viewBox="0 0 24 24" stroke="#0a0a0a" stroke-width="2"><rect width="20" height="16" x="2" y="4" rx="2"/><path d="m22 7-8.97 5.7a1.94 1.94 0 0 1-2.06 0L2 7"/></svg>
<span class="a t" style="top:761.5px;font-size:21.6px;color:#0a0a0a;-webkit-text-stroke:0.4px #0a0a0a;transform:scaleX(1.0564);transform-origin:0 50%;left:2419.9px;">Invite</span>
<div class="a" style="left:904.5px;top:823.9px;width:1629.8px;height:1.6px;background:#f4f4f8;"></div>
<div class="a" style="left:931.7px;top:864.6px;width:27.0px;height:27.0px;background:#fff;border-radius:7.5px;border:2px solid #18181b;box-shadow:0 1px 2px rgba(0,0,0,.12);"></div>
<span class="a t" style="top:854.6px;font-size:23.4px;color:#111;-webkit-text-stroke:0.4px #111;transform:scaleX(1.0909);transform-origin:0 50%;left:1000.5px;">Woodgrove Bank</span>
<span class="a t" style="top:888.8px;font-size:21.4px;color:#6b7280;transform:scaleX(1.0446);transform-origin:0 50%;left:1000.3px;">WG-004</span>
<span class="a t" style="top:852.2px;font-size:23.4px;color:#111;-webkit-text-stroke:0.4px #111;transform:scaleX(1.0601);transform-origin:0 50%;left:1387.7px;">Priya Sharma</span>
<span class="a t" style="top:883.6px;font-size:21.6px;color:#6b7280;transform:scaleX(1.0210);transform-origin:0 50%;left:1387.8px;">p.sharma@woodgrove.com</span>
<div class="a" style="left:1776.2px;top:862.1px;width:104.1px;height:36.8px;background:#e0f2fe;border-radius:10.5px;"></div>
<span class="a t" style="top:869.0px;font-size:21.6px;color:#0369a1;-webkit-text-stroke:0.4px #0369a1;transform:scaleX(1.0757);transform-origin:0 50%;left:1793.5px;">Invited</span>
<span class="a t" style="top:867.6px;font-size:21.6px;color:#6b7280;transform:scaleX(1.0222);transform-origin:0 50%;left:2081.5px;">No submission</span>
<div class="a" style="left:2358.2px;top:852.8px;width:131.2px;height:48.8px;background:#fff;border-radius:10.5px;border:1.6px solid #e3e3eb;box-shadow:0 1px 3px rgba(0,0,0,.09), 0 1px 2px rgba(0,0,0,.04);"></div>
<svg class="a i" style="left:2372.8px;top:862.9px;" width="27.6" height="27.6" viewBox="0 0 24 24" stroke="#0a0a0a" stroke-width="2"><rect width="20" height="16" x="2" y="4" rx="2"/><path d="m22 7-8.97 5.7a1.94 1.94 0 0 1-2.06 0L2 7"/></svg>
<span class="a t" style="top:866.4px;font-size:21.6px;color:#0a0a0a;-webkit-text-stroke:0.4px #0a0a0a;transform:scaleX(1.0564);transform-origin:0 50%;left:2419.9px;">Invite</span>
<div class="a" style="left:904.5px;top:928.8px;width:1629.8px;height:1.6px;background:#f4f4f8;"></div>
<div class="a" style="left:931.7px;top:969.5px;width:27.0px;height:27.0px;background:#fff;border-radius:7.5px;border:2px solid #18181b;box-shadow:0 1px 2px rgba(0,0,0,.12);"></div>
<span class="a t" style="top:959.5px;font-size:23.4px;color:#111;-webkit-text-stroke:0.4px #111;transform:scaleX(1.0976);transform-origin:0 50%;left:1000.5px;">Alpine Ski House</span>
<span class="a t" style="top:993.4px;font-size:21.4px;color:#6b7280;transform:scaleX(1.0504);transform-origin:0 50%;left:1000.3px;">AS-005</span>
<span class="a t" style="top:957.1px;font-size:23.4px;color:#111;-webkit-text-stroke:0.4px #111;transform:scaleX(1.0835);transform-origin:0 50%;left:1388.8px;">Thomas Eriksen</span>
<span class="a t" style="top:988.5px;font-size:21.6px;color:#6b7280;transform:scaleX(1.0182);transform-origin:0 50%;left:1388.8px;">t.eriksen@alpineski.com</span>
<div class="a" style="left:1776.2px;top:967.0px;width:150.2px;height:36.8px;background:#f4f4f5;border-radius:10.5px;"></div>
<span class="a t" style="top:973.9px;font-size:21.6px;color:#62626c;-webkit-text-stroke:0.4px #62626c;transform:scaleX(1.0437);transform-origin:0 50%;left:1794.3px;">Not Started</span>
<span class="a t" style="top:972.5px;font-size:21.6px;color:#6b7280;transform:scaleX(1.0222);transform-origin:0 50%;left:2081.5px;">No submission</span>
<div class="a" style="left:2358.2px;top:957.7px;width:131.2px;height:48.8px;background:#fff;border-radius:10.5px;border:1.6px solid #e3e3eb;box-shadow:0 1px 3px rgba(0,0,0,.09), 0 1px 2px rgba(0,0,0,.04);"></div>
<svg class="a i" style="left:2372.8px;top:967.8px;" width="27.6" height="27.6" viewBox="0 0 24 24" stroke="#0a0a0a" stroke-width="2"><rect width="20" height="16" x="2" y="4" rx="2"/><path d="m22 7-8.97 5.7a1.94 1.94 0 0 1-2.06 0L2 7"/></svg>
<span class="a t" style="top:971.3px;font-size:21.6px;color:#0a0a0a;-webkit-text-stroke:0.4px #0a0a0a;transform:scaleX(1.0564);transform-origin:0 50%;left:2419.9px;">Invite</span>
<div class="a" style="left:904.5px;top:1033.7px;width:1629.8px;height:1.6px;background:#f4f4f8;"></div>
<div class="a" style="left:931.7px;top:1074.4px;width:27.0px;height:27.0px;background:#fff;border-radius:7.5px;border:2px solid #18181b;box-shadow:0 1px 2px rgba(0,0,0,.12);"></div>
<span class="a t" style="top:1064.4px;font-size:23.4px;color:#111;-webkit-text-stroke:0.4px #111;transform:scaleX(1.0938);transform-origin:0 50%;left:999.4px;">Fabrikam Inc</span>
<span class="a t" style="top:1098.7px;font-size:21.4px;color:#6b7280;transform:scaleX(1.0696);transform-origin:0 50%;left:999.2px;">FB-003</span>
<span class="a t" style="top:1062.0px;font-size:23.4px;color:#111;-webkit-text-stroke:0.4px #111;transform:scaleX(1.0985);transform-origin:0 50%;left:1387.7px;">David Kowalski</span>
<span class="a t" style="top:1093.4px;font-size:21.6px;color:#6b7280;transform:scaleX(1.0238);transform-origin:0 50%;left:1388.8px;">d.kowalski@fabrikam.com</span>
<div class="a" style="left:1776.2px;top:1071.9px;width:236.6px;height:36.8px;background:#ffedd5;border-radius:10.5px;"></div>
<span class="a t" style="top:1078.8px;font-size:21.6px;color:#c2410c;-webkit-text-stroke:0.4px #c2410c;transform:scaleX(1.0099);transform-origin:0 50%;left:1795.1px;">Changes Requested</span>
<span class="a t" style="top:1060.4px;font-size:21.6px;color:#111;-webkit-text-stroke:0.4px #111;transform:scaleX(0.9313);transform-origin:0 50%;left:2082.5px;">v1</span>
<span class="a t" style="top:1092.8px;font-size:21.6px;color:#6b7280;transform:scaleX(1.0142);transform-origin:0 50%;left:2082.5px;">Submitted 19 Apr 2026</span>
<div class="a" style="left:2358.2px;top:1062.6px;width:131.2px;height:48.8px;background:#fff;border-radius:10.5px;border:1.6px solid #e3e3eb;box-shadow:0 1px 3px rgba(0,0,0,.09), 0 1px 2px rgba(0,0,0,.04);"></div>
<svg class="a i" style="left:2372.8px;top:1072.7px;" width="27.6" height="27.6" viewBox="0 0 24 24" stroke="#0a0a0a" stroke-width="2"><rect width="20" height="16" x="2" y="4" rx="2"/><path d="m22 7-8.97 5.7a1.94 1.94 0 0 1-2.06 0L2 7"/></svg>
<span class="a t" style="top:1076.2px;font-size:21.6px;color:#0a0a0a;-webkit-text-stroke:0.4px #0a0a0a;transform:scaleX(1.0564);transform-origin:0 50%;left:2419.9px;">Invite</span>
<div class="a" style="left:904.5px;top:1138.6px;width:1629.8px;height:1.6px;background:#f4f4f8;"></div>
<div class="a" style="left:931.7px;top:1179.3px;width:27.0px;height:27.0px;background:#fff;border-radius:7.5px;border:2px solid #18181b;box-shadow:0 1px 2px rgba(0,0,0,.12);"></div>
<span class="a t" style="top:1169.3px;font-size:23.4px;color:#111;-webkit-text-stroke:0.4px #111;transform:scaleX(1.1326);transform-origin:0 50%;left:999.4px;">Northwind Traders</span>
<span class="a t" style="top:1204.0px;font-size:21.4px;color:#6b7280;transform:scaleX(1.0306);transform-origin:0 50%;left:999.3px;">NW-001</span>
<span class="a t" style="top:1166.9px;font-size:23.4px;color:#111;-webkit-text-stroke:0.4px #111;transform:scaleX(1.0898);transform-origin:0 50%;left:1388.8px;">James Chen</span>
<span class="a t" style="top:1198.3px;font-size:21.6px;color:#6b7280;transform:scaleX(1.0173);transform-origin:0 50%;left:1389.8px;">james.chen@northwind.com</span>
<div class="a" style="left:1776.2px;top:1176.8px;width:133.2px;height:36.8px;background:#d1fae5;border-radius:10.5px;"></div>
<span class="a t" style="top:1183.7px;font-size:21.6px;color:#047857;-webkit-text-stroke:0.4px #047857;transform:scaleX(1.0514);transform-origin:0 50%;left:1796.0px;">Accepted</span>
<span class="a t" style="top:1165.3px;font-size:21.6px;color:#111;-webkit-text-stroke:0.4px #111;transform:scaleX(0.9313);transform-origin:0 50%;left:2082.5px;">v1</span>
<span class="a t" style="top:1197.7px;font-size:21.6px;color:#6b7280;transform:scaleX(1.0142);transform-origin:0 50%;left:2082.5px;">Submitted 19 Apr 2026</span>
<div class="a" style="left:2358.2px;top:1167.5px;width:131.2px;height:48.8px;background:#fff;border-radius:10.5px;border:1.6px solid #e3e3eb;box-shadow:0 1px 3px rgba(0,0,0,.09), 0 1px 2px rgba(0,0,0,.04);"></div>
<svg class="a i" style="left:2372.8px;top:1177.6px;" width="27.6" height="27.6" viewBox="0 0 24 24" stroke="#0a0a0a" stroke-width="2"><rect width="20" height="16" x="2" y="4" rx="2"/><path d="m22 7-8.97 5.7a1.94 1.94 0 0 1-2.06 0L2 7"/></svg>
<span class="a t" style="top:1181.1px;font-size:21.6px;color:#0a0a0a;-webkit-text-stroke:0.4px #0a0a0a;transform:scaleX(1.0564);transform-origin:0 50%;left:2419.9px;">Invite</span>
<div class="a" style="left:902.0px;top:1275.2px;width:1634.0px;height:400.0px;background:#fff;border-radius:22px;border:1.6px solid #e6e6ee;box-shadow:0 2px 5px rgba(24,24,40,.10), 0 1px 3px rgba(24,24,40,.06);"></div>
<span class="a t" style="top:1324.0px;font-size:23.6px;color:#0a0a0a;font-weight:700;transform:scaleX(0.9658);transform-origin:0 50%;left:944.5px;">Reminder Rules</span>
<svg class="a i" style="left:2465.5px;top:1321.2px;" width="28.8" height="28.8" viewBox="0 0 24 24" stroke="#6b7280" stroke-width="2"><path d="m18 15-6-6-6 6"/></svg>
<span class="a t" style="top:1373.3px;font-size:21.6px;color:#6b7280;transform:scaleX(1.0355);transform-origin:0 50%;left:945.5px;">Set up friendly follow-ups to help participants stay on track.</span>
<div class="a" style="left:944.9px;top:1439.0px;width:1548.6px;height:200.0px;background:#fff;border-radius:13px;border:1.6px solid #eeeef2;"></div>
<span class="a t" style="top:1466.4px;font-size:24.2px;color:#111;-webkit-text-stroke:0.4px #111;transform:scaleX(1.0656);transform-origin:0 50%;left:966.6px;">Send 7 days before the deadline</span>
<div class="a" style="left:2285.0px;top:1462.3px;width:117.0px;height:60.0px;background:#fff;border-radius:11px;border:1.6px solid #e3e3eb;box-shadow:0 1px 3px rgba(0,0,0,.09), 0 1px 2px rgba(0,0,0,.04);"></div>
<span class="a t" style="top:1478.0px;font-size:21.5px;color:#111;-webkit-text-stroke:0.4px #111;transform:scaleX(1.0252);transform-origin:0 50%;left:2307.5px;">Disable</span>
<svg class="a i" style="left:2429.3px;top:1474.1px;" width="28.8" height="28.8" viewBox="0 0 24 24" stroke="#18181b" stroke-width="2.1"><circle cx="12" cy="12" r="1"/><circle cx="19" cy="12" r="1"/><circle cx="5" cy="12" r="1"/></svg>
</div></div>
</body></html>
